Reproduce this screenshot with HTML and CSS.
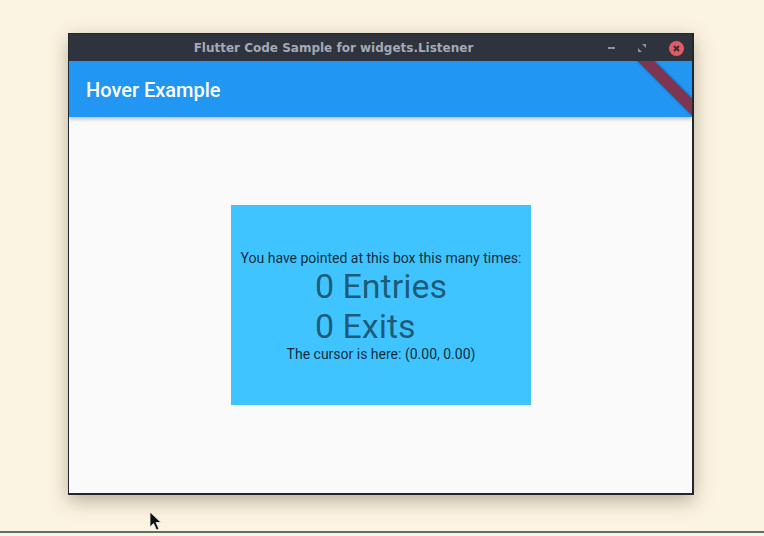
FILE: index.html
```html
<!DOCTYPE html>
<html>
<head>
<meta charset="utf-8">
<link rel="stylesheet" href="styles.css">
</head>
<body>
<div class="desktop">
  <div class="window">
    <div class="titlebar">
      <span class="title">Flutter Code Sample for widgets.Listener</span>
      <div class="controls">
        <span class="btn-min"></span>
        <svg class="btn-max" width="8" height="8" viewBox="0 0 8 8"><path d="M4 0H8V4Z M0 4V8H4Z" fill="#8d939c"/></svg>
        <svg class="btn-close" width="15" height="15" viewBox="0 0 15 15"><circle cx="7.5" cy="7.5" r="7.5" fill="#e25b64"/><path d="M5 5L10 10M10 5L5 10" stroke="#2e333d" stroke-width="2"/></svg>
      </div>
    </div>
    <div class="app">
      <div class="appbar">
        <span class="apptitle">Hover Example</span>
        <div class="banner"></div>
      </div>
      <div class="body">
        <div class="box">
          <div class="small">You have pointed at this box this many times:</div>
          <div class="big">0 Entries<br>0 Exits</div>
          <div class="small">The cursor is here: (0.00, 0.00)</div>
        </div>
      </div>
    </div>
  </div>
  <svg class="cursor" width="14" height="20" viewBox="0 0 14 20"><path d="M1 1V16L4.5 12.5L7.5 19L10 18L7 11.5H12Z" fill="#111" stroke="#eee" stroke-width="0.8"/></svg>
  <div class="taskline"></div>
</div>
</body>
</html>
```
FILE: styles.css
```css
html, body { margin: 0; padding: 0; }
body { background: #fcf4e1; width: 764px; height: 536px; overflow: hidden; }
.desktop {
  position: relative;
  width: 764px; height: 536px;
  background: #fcf4e2;
  padding-top: 33px;
  padding-left: 68px;
  box-sizing: border-box;
}
.window {
  width: 626px;
  height: 462px;
  box-sizing: border-box;
  border: 1px solid #22262d;
  border-right-width: 2px;
  border-bottom-width: 2px;
  background: #fafafa;
  display: flex;
  flex-direction: column;
  box-shadow: 0 6px 18px rgba(60, 50, 20, 0.35);
}
.titlebar {
  height: 27px;
  flex: none;
  background: #2e333d;
  position: relative;
  display: flex;
  align-items: center;
  justify-content: center;
  padding-right: 94px;
}
.title {
  font-family: "DejaVu Sans", sans-serif;
  font-weight: bold;
  font-size: 12px;
  color: #a3aab5;
  margin-top: 1px;
}
.controls {
  position: absolute;
  right: 8px;
  top: 0;
  height: 27px;
  display: flex;
  align-items: center;
}
.btn-min { width: 7px; height: 2px; background: #8d939c; margin-right: 23px; margin-top: 1px; }
.btn-max { margin-right: 23px; margin-top: 1px; }
.btn-close { margin-top: 1px; }
.app { flex: 1; display: flex; flex-direction: column; position: relative; overflow: hidden; }
.appbar {
  height: 56px;
  flex: none;
  background: #2196f3;
  display: flex;
  align-items: center;
  padding-left: 17px;
  box-shadow: 0 2px 4px rgba(0,0,0,0.25);
  position: relative;
  z-index: 1;
  overflow: hidden;
}
.apptitle {
  font-family: Roboto, sans-serif;
  font-weight: 500;
  font-size: 20px;
  color: #ffffff;
  margin-top: 1px;
}
.banner {
  position: absolute;
  top: 15px;
  right: -35px;
  width: 120px;
  height: 12px;
  background: #7e3650;
  box-shadow: 0 0 3px rgba(0,0,0,0.3);
  transform: rotate(45deg);
  transform-origin: center;
}
.body {
  flex: 1;
  display: flex;
  align-items: center;
  justify-content: center;
  background: #fafafa;
}
.box {
  width: 300px;
  height: 200px;
  box-sizing: border-box;
  padding-top: 2px;
  background: #40c4ff;
  display: flex;
  flex-direction: column;
  align-items: center;
  justify-content: center;
  font-family: Roboto, sans-serif;
  margin-left: 1px;
}
.small { font-size: 14px; line-height: 16px; color: rgba(0,0,0,0.8); }
.big { font-size: 34px; line-height: 40px; color: rgba(0,0,0,0.54); text-align: left; }
.cursor { position: absolute; left: 149px; top: 511px; }
.taskline { position: absolute; left: 0; right: 0; top: 531px; height: 2px; background: #5f6d66; }
```
